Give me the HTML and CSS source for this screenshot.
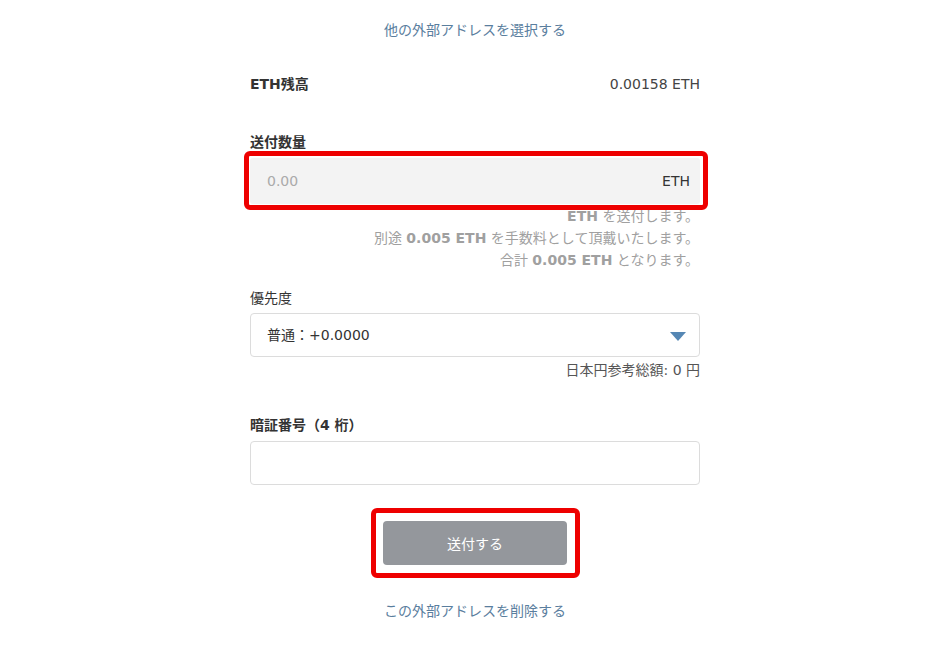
FILE: index.html
```html
<!DOCTYPE html>
<html lang="ja">
<head>
<meta charset="utf-8">
<link rel="stylesheet" href="styles.css">
</head>
<body>
<div class="page">
  <a class="link top-link">他の外部アドレスを選択する</a>

  <div class="balance">
    <span class="label-bold">ETH残高</span>
    <span class="balance-value">0.00158 ETH</span>
  </div>

  <div class="label-bold field-label amount-label">送付数量</div>
  <div class="mark-wrap">
    <div class="amount-input">
      <span class="placeholder">0.00</span>
      <span class="unit">ETH</span>
    </div>
    <div class="mark mark-input"></div>
  </div>
  <div class="help">
    <div><b>ETH</b> を送付します。</div>
    <div>別途 <b>0.005 ETH</b> を手数料として頂戴いたします。</div>
    <div>合計 <b>0.005 ETH</b> となります。</div>
  </div>

  <div class="field-label priority-label">優先度</div>
  <div class="select">
    <span>普通：+0.0000</span>
    <svg class="arrow" width="16" height="9" viewBox="0 0 16 9"><polygon points="0,0 16,0 8,9" fill="#5587b4"/></svg>
  </div>
  <div class="jpy">日本円参考総額: 0 円</div>

  <div class="label-bold field-label pin-label">暗証番号（4 桁）</div>
  <div class="pin-input"></div>

  <div class="btn-row">
    <div class="mark-wrap">
      <button class="send-btn">送付する</button>
      <div class="mark mark-btn"></div>
    </div>
  </div>

  <a class="link bottom-link">この外部アドレスを削除する</a>
</div>
</body>
</html>
```

FILE: styles.css
```css
* { box-sizing: border-box; }
html, body { margin: 0; padding: 0; background: #fff; }
body {
  font-family: "DejaVu Sans", "Noto Sans CJK JP", sans-serif;
  font-size: 14px;
  color: #333;
  line-height: 20px;
}
.page {
  width: 450px;
  margin: 0 auto;
  padding-top: 19px;
  display: flex;
  flex-direction: column;
}
.link {
  display: block;
  text-align: center;
  color: #5a7e9e;
  text-decoration: none;
  cursor: pointer;
  font-family: "Noto Sans CJK JP", sans-serif;
}
.balance {
  margin-top: 35px;
  display: flex;
  justify-content: space-between;
  align-items: center;
  height: 20px;
}
.label-bold { font-weight: 700; }
.balance-value { color: #444; }
.field-label { margin-bottom: 6px; height: 20px; }
.amount-label { margin-top: 38px; }
.mark-wrap { position: relative; }
.amount-input {
  height: 46px;
  background: #f3f3f3;
  border-radius: 3px;
  display: flex;
  align-items: center;
  justify-content: space-between;
  padding: 0 10px 0 17px;
}
.placeholder { color: #aaa; }
.unit { color: #333; }
.mark {
  position: absolute;
  border: 5px solid #ee0000;
  border-radius: 6px;
  pointer-events: none;
}
.mark-input { left: -6px; right: -8px; top: -7px; bottom: -6px; }
.mark-btn { left: -12px; right: -13px; top: -13px; bottom: -13px; }
.help {
  text-align: right;
  color: #a0a0a0;
  font-size: 14px;
  line-height: 22px;
  padding-top: 1px;
  padding-right: 1px;
}
.help div { height: 22px; }
.help b { font-weight: 700; }
.priority-label { margin-top: 17px; margin-bottom: 5px; }
.select {
  height: 44px;
  border: 1px solid #dcdcdc;
  border-radius: 4px;
  display: flex;
  align-items: center;
  justify-content: space-between;
  padding: 0 13px 0 16px;
}
.arrow { margin-top: 2px; }
.jpy {
  margin-top: 3px;
  text-align: right;
  color: #555;
  height: 20px;
}
.pin-label { margin-top: 35px; }
.pin-input {
  height: 44px;
  border: 1px solid #dcdcdc;
  border-radius: 4px;
}
.btn-row {
  margin-top: 36px;
  display: flex;
  justify-content: center;
}
.send-btn {
  width: 184px;
  height: 44px;
  border: none;
  border-radius: 4px;
  background: #94979c;
  color: #fff;
  font-family: "Noto Sans CJK JP", sans-serif;
  font-size: 14px;
  display: block;
}
.bottom-link { margin-top: 35px; }
```
